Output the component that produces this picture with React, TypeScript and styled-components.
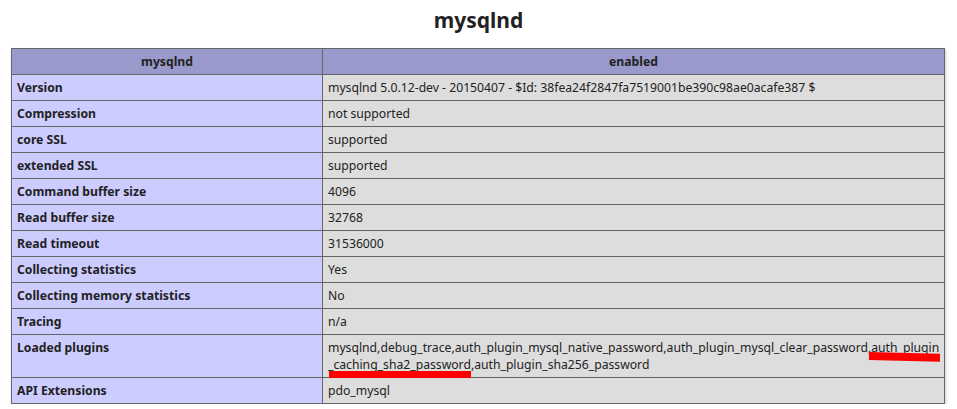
import styled, { createGlobalStyle } from "styled-components";

const GlobalStyle = createGlobalStyle`
  html, body {
    margin: 0;
    padding: 0;
    background: #ffffff;
  }
  body {
    font-family: "Noto Sans", "Open Sans", "DejaVu Sans", sans-serif;
    color: #222222;
  }
`;

const Page = styled.div`
  width: 957px;
  padding-top: 6px;
`;

const Title = styled.h2`
  margin: 0 0 14px;
  font-size: 21px;
  line-height: 28px;
  font-weight: 700;
  text-align: center;
  color: #222222;
`;

const Table = styled.table`
  border-collapse: collapse;
  table-layout: fixed;
  width: 934px;
  margin: 0 0 0 11px;
  box-shadow: 1px 2px 3px #cccccc;
  font-size: 12.2px;
`;

const KeyCol = styled.col`
  width: 311px;
`;

const HeadCell = styled.th`
  background: #9999cc;
  border: 1px solid #666666;
  padding: 4px 5px;
  line-height: 17px;
  font-weight: 700;
  text-align: center;
  color: #222222;
`;

const KeyCell = styled.td`
  background: #ccccff;
  border: 1px solid #666666;
  padding: 4px 5px;
  line-height: 17px;
  font-weight: 700;
  vertical-align: baseline;
  color: #222222;
`;

const ValueCell = styled.td`
  position: relative;
  background: #dddddd;
  border: 1px solid #666666;
  padding: 4px 5px;
  line-height: 17px;
  vertical-align: baseline;
  color: #222222;
  white-space: nowrap;
`;

// red highlight strokes drawn over the plugin list
const Mark = styled.span<{ $left: number; $top: number; $width: number; $tilt: number }>`
  position: absolute;
  left: ${(p) => p.$left}px;
  top: ${(p) => p.$top}px;
  width: ${(p) => p.$width}px;
  height: 8px;
  background: #ff0000;
  transform: rotate(${(p) => p.$tilt}deg);
  transform-origin: left center;
`;

const rows: [string, string][] = [
  ["Version", "mysqlnd 5.0.12-dev - 20150407 - $Id: 38fea24f2847fa7519001be390c98ae0acafe387 $"],
  ["Compression", "not supported"],
  ["core SSL", "supported"],
  ["extended SSL", "supported"],
  ["Command buffer size", "4096"],
  ["Read buffer size", "32768"],
  ["Read timeout", "31536000"],
  ["Collecting statistics", "Yes"],
  ["Collecting memory statistics", "No"],
  ["Tracing", "n/a"],
];

export default function App() {
  return (
    <Page>
      <GlobalStyle />
      <Title>mysqlnd</Title>
      <Table>
        <colgroup>
          <KeyCol />
          <col />
        </colgroup>
        <tbody>
          <tr>
            <HeadCell>mysqlnd</HeadCell>
            <HeadCell>enabled</HeadCell>
          </tr>
          {rows.map(([k, v]) => (
            <tr key={k}>
              <KeyCell>{k}</KeyCell>
              <ValueCell>{v}</ValueCell>
            </tr>
          ))}
          <tr>
            <KeyCell>Loaded plugins</KeyCell>
            <ValueCell>
              mysqlnd,debug_trace,auth_plugin_mysql_native_password,auth_plugin_mysql_clear_password,auth_plugin
              <br />
              _caching_sha2_password,auth_plugin_sha256_password
              <Mark $left={546} $top={17} $width={71} $tilt={1.5} />
              <Mark $left={6} $top={36} $width={142} $tilt={0} />
            </ValueCell>
          </tr>
          <tr>
            <KeyCell>API Extensions</KeyCell>
            <ValueCell>pdo_mysql</ValueCell>
          </tr>
        </tbody>
      </Table>
    </Page>
  );
}
